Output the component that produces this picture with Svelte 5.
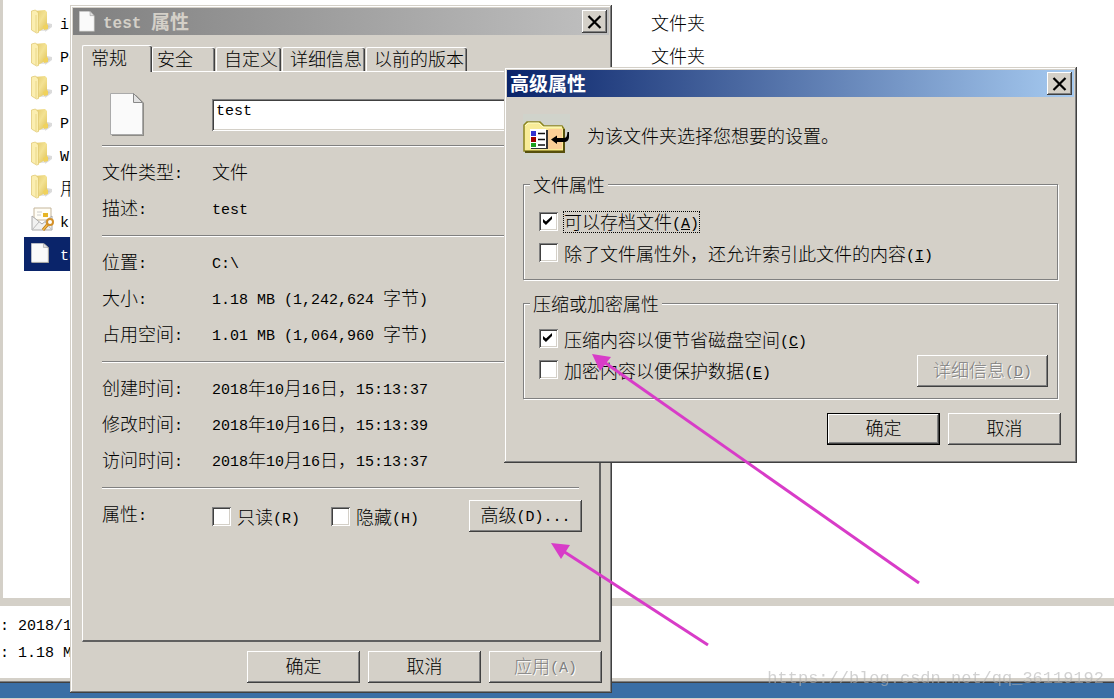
<script lang="ts">
  let fileName = $state('test')
  let activeTab = $state('常规')

  const files = [
    { name: 'in', icon: 'folder', type: '文件夹' },
    { name: 'Pe', icon: 'folder', type: '文件夹' },
    { name: 'Pr', icon: 'folder' },
    { name: 'Pr', icon: 'folder' },
    { name: 'Wi', icon: 'folder' },
    { name: '用', icon: 'folder' },
    { name: 'k', icon: 'key' },
    { name: 'te', icon: 'file', selected: true },
  ]

  const tabs = ['常规', '安全', '自定义', '详细信息', '以前的版本']

  const groups = [
    [
      ['文件类型:', '文件'],
      ['描述:', 'test'],
    ],
    [
      ['位置:', 'C:\\'],
      ['大小:', '1.18 MB (1,242,624 字节)'],
      ['占用空间:', '1.01 MB (1,064,960 字节)'],
    ],
    [
      ['创建时间:', '2018年10月16日，15:13:37'],
      ['修改时间:', '2018年10月16日，15:13:39'],
      ['访问时间:', '2018年10月16日，15:13:37'],
    ],
  ]

  // latin runs are half the width of a hanzi; "&" marks the access key
  function runs(text: string) {
    return text.match(/&.|[ -%'-~]+|[^ -~]+/g) ?? []
  }
</script>

{#snippet caption(text)}
  <span class="caption">{#each runs(text) as run}{#if run[0] === '&'}<u class="latin">{run[1]}</u>{:else if run.charCodeAt(0) < 127}<span class="latin">{run}</span>{:else}{run}{/if}{/each}</span>
{/snippet}

{#snippet page(width, height)}
  <svg {width} {height} viewBox="0 0 34 43" preserveAspectRatio="none" aria-hidden="true">
    <path d="M2 2h24l8 8v33H2z" fill="#8d8b86" />
    <path d="M.5.5h23l9 9v32H.5z" fill="#fafafa" stroke="#aaa" />
    <path d="M23.500 .5v9h9z" fill="#e2e2e2" stroke="#888" />
  </svg>
{/snippet}

{#snippet closeButton()}
  <button class="close" aria-label="关闭">
    <svg width="15" height="14" viewBox="0 0 15 14" aria-hidden="true">
      <path d="M1.500 1l12 12M13.500 1l-12 12" stroke="#000" stroke-width="2.200" fill="none" />
    </svg>
  </button>
{/snippet}

{#snippet check(text, checked, focused)}
  <label class="check">
    <input type="checkbox" {checked} />
    <span class:focused>{@render caption(text)}</span>
  </label>
{/snippet}

<div class="desktop">
  <svg width="0" height="0" class="defs" aria-hidden="true">
    <linearGradient id="folder-front" x1="0" y1="0" x2="1" y2="1">
      <stop offset="0" stop-color="#e3c866" />
      <stop offset=".5" stop-color="#f3e294" />
      <stop offset="1" stop-color="#dfc050" />
    </linearGradient>
  </svg>

  <div class="explorer">
    {#each files as file}
      <div class="file" class:selected={file.selected}>
        <div class="file-icon">
          {#if file.icon === 'folder'}
            <svg width="22" height="25" viewBox="0 0 22 25" aria-hidden="true">
              <path d="M14 23l7-5v-3l-5-1z" fill="#999" opacity=".35" />
              <path d="M7 22l7 0 5-5-3-1z" fill="#999" opacity=".25" />
              <path d="M3 2l11-1 2 2v15l-9 5z" fill="url(#folder-front)" />
              <path d="M12 17l4-2 1 1v4l-4 1z" fill="#f0d25c" />
              <path d="M.5 2l4-1 3 3v19.500l-2 .5-5-3z" fill="#fbeeb0" stroke="#dcc46c" stroke-width=".7" />
              <path d="M5 6v17" stroke="#e6d080" stroke-width=".8" />
            </svg>
          {:else if file.icon === 'key'}
            <svg width="24" height="25" viewBox="0 0 24 25" aria-hidden="true">
              <path d="M3 1h17v12H3z" fill="#fffdf5" stroke="#c5b69b" />
              <path d="M6 5h5M6 8h4" stroke="#ccc" />
              <path d="M12 6h5v4h-5z" fill="#e6b422" />
              <path d="M1 9l10 8 10-8v14H1z" fill="#f1f1f1" stroke="#aaa" />
              <path d="M1 23l7-8M21 23l-7-8" stroke="#bbb" />
              <path d="M17 17l-5 6" stroke="#b87818" stroke-width="3" />
              <path d="M17 17l-5 6" stroke="#f1b94a" stroke-width="1.500" />
              <circle cx="19" cy="15" r="3" fill="#fff" stroke="#d39029" stroke-width="2" />
            </svg>
          {:else}
            {@render page(18, 20)}
          {/if}
        </div>
        <div class="file-name">{@render caption(file.name)}</div>
        {#if file.type}<div>{file.type}</div>{/if}
      </div>
    {/each}
  </div>
  <div class="details">
    <div>{@render caption(': 2018/1')}</div>
    <div>{@render caption(': 1.18 M')}</div>
  </div>
  <div class="taskbar"></div>

  <section class="window properties">
    <header class="title inactive">
      {@render page(16, 21)}
      <h1>{@render caption('test 属性')}</h1>
      {@render closeButton()}
    </header>
    <div class="properties-body">
      <div class="tabs" role="tablist">
        {#each tabs as tab}
          <button
            role="tab"
            class="tab"
            class:active={tab === activeTab}
            aria-selected={tab === activeTab}
            onclick={() => (activeTab = tab)}>{tab}</button>
        {/each}
      </div>
      <div class="panel">
        <div class="name-row">
          <div class="name-icon">{@render page(34, 43)}</div>
          <input class="name-input" type="text" aria-label="文件名" bind:value={fileName} />
        </div>
        {#each groups as group}
          <dl>
            {#each group as [label, value]}
              <div class="row">
                <dt>{@render caption(label)}</dt>
                <dd>{@render caption(value)}</dd>
              </div>
            {/each}
          </dl>
        {/each}
        <div class="attributes">
          <div class="attributes-label">{@render caption('属性:')}</div>
          {@render check('只读(R)', false, false)}
          {@render check('隐藏(H)', false, false)}
          <button class="button advanced">{@render caption('高级(D)...')}</button>
        </div>
      </div>
      <footer class="buttons">
        <button class="button">确定</button>
        <button class="button">取消</button>
        <button class="button" disabled>{@render caption('应用(A)')}</button>
      </footer>
    </div>
  </section>

  <section class="window dialog">
    <header class="title">
      <h1>高级属性</h1>
      {@render closeButton()}
    </header>
    <div class="dialog-body">
      <div class="intro">
        <svg width="47" height="45" viewBox="0 0 47 45" aria-hidden="true">
          <path d="M0 0h47v45H0z" fill="#d0d3cb" />
          <path d="M1 37V11l3-3h13l4 4h18l2 3v22z" fill="#f8ec98" stroke="#8a8420" stroke-width="1.500" />
          <path d="M25 15h14v20H25z" fill="#fbcf96" />
          <path d="M2 12l3-3h11l4 4h19" stroke="#ffffc8" fill="none" />
          <path d="M2 38h39V15" stroke="#55500c" stroke-width="2" fill="none" />
          <path d="M8 16h17v19H8z" fill="#333" />
          <path d="M7 15h16v19H7z" fill="#fff" />
          <path d="M8 17h5v5H8z" fill="#3434d0" />
          <path d="M8 23h5v5H8z" fill="#a00000" />
          <path d="M8 29h5v4H8z" fill="#20a020" />
          <path d="M15 19.500h7M15 25.500h7M15 31h7" stroke="#111" stroke-width="1.500" />
          <path d="M28 25.500l6-4v2.500h7c3 0 3-3 3.500-6H46v5c0 3-2 5-5 5h-7v2z" fill="#000" />
        </svg>
        <p>为该文件夹选择您想要的设置。</p>
      </div>
      <fieldset>
        <legend>文件属性</legend>
        <div class="checks">
          {@render check('可以存档文件(&A)', true, true)}
          {@render check('除了文件属性外，还允许索引此文件的内容(&I)', false, false)}
        </div>
      </fieldset>
      <fieldset class="compress">
        <legend>压缩或加密属性</legend>
        <div class="compress-row">
          <div class="checks">
            {@render check('压缩内容以便节省磁盘空间(&C)', true, false)}
            {@render check('加密内容以便保护数据(&E)', false, false)}
          </div>
          <button class="button wide" disabled>{@render caption('详细信息(&D)')}</button>
        </div>
      </fieldset>
    </div>
    <footer class="buttons dialog-buttons">
      <button class="button default">确定</button>
      <button class="button">取消</button>
    </footer>
  </section>

  <svg class="arrows" width="1114" height="699" viewBox="0 0 1114 699" aria-hidden="true">
    <g stroke="#d83cc8" stroke-width="3">
      <path d="M604 362L919 583" />
      <path d="M563 551L708 645" />
    </g>
    <g fill="#d83cc8">
      <path d="M592 354l19 3-11 14z" />
      <path d="M551 543l19 2-9 14z" />
    </g>
  </svg>
  <div class="watermark">https://blog.csdn.net/qq_36119192</div>
</div>

<style>
  :global(body) {
    background: #fff;
  }

  .desktop {
    position: relative;
    display: flex;
    flex-direction: column;
    min-height: 100vh;
    overflow: hidden;
    color: #000;
    font-family: 'Noto Sans CJK SC', sans-serif;
    font-size: 18px;
    font-weight: 300;
    line-height: 24px;
  }

  .desktop * {
    box-sizing: border-box;
  }

  .defs {
    position: absolute;
  }

  .caption {
    white-space: pre;
  }

  .latin {
    font-family: 'Liberation Mono', monospace;
    font-size: 15px;
    line-height: 0;
    vertical-align: 1px;
  }

  button,
  input {
    font: inherit;
    color: inherit;
  }

  .explorer {
    flex: 1;
    padding-top: 6px;
    border-left: 3px solid #d4d0c8;
  }

  .file {
    display: flex;
    align-items: center;
    height: 33px;
    margin-left: 21px;
    padding-bottom: 2px;
    white-space: nowrap;
  }

  .file.selected {
    height: 34px;
    color: #fff;
    background: #0a246a;
    width: 60px;
  }

  .file-icon {
    display: flex;
    flex: none;
    width: 36px;
    padding-left: 7px;
  }

  .file-name {
    flex: 0 0 591px;
  }

  .selected .file-name {
    flex-basis: auto;
  }

  .details {
    height: 80px;
    padding-top: 4px;
    border-top: 8px solid #d4d0c8;
    line-height: 27px;
  }

  .taskbar {
    height: 21px;
    background: #3a6ea5;
    border-top: 3px solid #d4d0c8;
    border-bottom: 1px solid #d4d0c8;
    box-shadow: inset 0 1px #808080, inset 0 2px #404040;
  }

  .window {
    position: absolute;
    padding: 3px;
    background: #d4d0c8;
    box-shadow:
      inset -1px -1px #404040,
      inset 1px 1px #d4d0c8,
      inset -2px -2px #808080,
      inset 2px 2px #fff;
  }

  .properties {
    left: 70px;
    top: 5px;
    width: 542px;
  }

  .dialog {
    left: 504px;
    top: 67px;
    width: 573px;
  }

  .title {
    display: flex;
    align-items: center;
    height: 27px;
    padding: 0 2px 0 3px;
    color: #fff;
    background: linear-gradient(to right, #0a246a, #a6caf0);
  }

  .title.inactive {
    padding-left: 6px;
    color: #d4d0c8;
    background: linear-gradient(to right, #808080, #c0c0c0);
  }

  h1 {
    flex: 1;
    margin: 0;
    padding-bottom: 2px;
    font-size: 19px;
    font-weight: bold;
  }

  h1 .latin {
    font-size: 16px;
  }

  .inactive h1 {
    padding-left: 8px;
  }

  .close {
    display: flex;
    align-items: center;
    justify-content: center;
    width: 25px;
    height: 23px;
    padding: 0;
  }

  .close,
  .button {
    border: 0;
    background: #d4d0c8;
    box-shadow:
      inset -1px -1px #404040,
      inset 1px 1px #fff,
      inset -2px -2px #808080;
  }

  .button {
    width: 113px;
    height: 32px;
    padding: 0 0 4px;
  }

  .button.wide {
    width: 131px;
  }

  .button.default {
    border: 1px solid #000;
  }

  .button:disabled {
    color: #808080;
    text-shadow: 1px 1px #fff;
  }

  .properties-body {
    padding: 10px 7px 7px 9px;
  }

  .tabs {
    display: flex;
    align-items: flex-end;
    gap: 1px;
  }

  .tab {
    height: 24px;
    padding: 0 3px 2px 7px;
    border: 0;
    border-top: 1px solid #fff;
    border-left: 1px solid #fff;
    border-radius: 2px 2px 0 0;
    background: #d4d0c8;
    box-shadow: inset -1px 0 #404040, inset -2px 0 #808080;
    text-align: left;
    line-height: 21px;
  }

  .tab:nth-child(2) {
    width: 63px;
    padding-left: 4px;
  }

  .tab.active {
    position: relative;
    width: 70px;
    height: 27px;
    margin: 0 -1px -1px 0;
    padding: 0 0 4px 8px;
  }

  .panel {
    min-height: 571px;
    margin-right: 1px;
    padding: 0 20px 0 19px;
    border: 1px solid #fff;
    border-right: 2px solid #606060;
    border-bottom: 2px solid #606060;
  }

  .name-row {
    display: flex;
    align-items: center;
    padding: 21px 0 9px;
  }

  .name-icon {
    display: flex;
    width: 110px;
    padding-left: 8px;
  }

  .name-input {
    flex: 1;
    min-width: 0;
    height: 32px;
    padding: 0 4px 6px;
    border: 0;
    background: #fff;
    box-shadow:
      inset 1px 1px #808080,
      inset -1px -1px #fff,
      inset 2px 2px #404040,
      inset -2px -2px #d4d0c8;
    font-family: 'Liberation Mono', 'Noto Sans CJK SC', monospace;
    font-size: 15px;
  }

  dl,
  .attributes {
    margin: 0;
    padding: 7px 0 9px;
    border-top: 1px solid #808080;
    box-shadow: inset 0 1px #fff;
  }

  .row {
    display: flex;
    height: 36px;
    line-height: 35px;
  }

  dl {
    padding-top: 8px;
  }

  dt,
  .attributes-label {
    width: 110px;
  }

  dd {
    margin: 0;
  }

  .attributes {
    display: flex;
    align-items: center;
    padding-top: 12px;
  }

  .attributes-label {
    padding-bottom: 6px;
  }

  .attributes .check {
    width: 119px;
  }

  .advanced {
    margin-left: auto;
    margin-right: -3px;
  }

  .check {
    display: flex;
    align-items: center;
    gap: 6px;
  }

  .check input {
    appearance: none;
    flex: none;
    width: 19px;
    height: 19px;
    margin: 0;
    background: #fff;
    box-shadow:
      inset 1px 1px #808080,
      inset -1px -1px #fff,
      inset 2px 2px #404040,
      inset -2px -2px #d4d0c8;
  }

  .check input:checked::before {
    content: '';
    display: block;
    width: 9px;
    height: 9px;
    margin: 4px 0 0 4px;
    background: #000;
    clip-path: polygon(0 33%, 33% 60%, 100% 0, 100% 33%, 33% 100%, 0 70%);
  }

  .focused {
    height: 20px;
    outline: 1px dotted #000;
    line-height: 18px;
  }

  .buttons {
    display: flex;
    justify-content: flex-end;
    gap: 8px;
    padding-top: 9px;
  }

  .dialog-body {
    padding: 17px 16px 0;
  }

  .intro {
    display: flex;
    align-items: center;
    gap: 17px;
    margin-bottom: 14px;
  }

  .intro p {
    margin: 0;
    padding-bottom: 4px;
  }

  fieldset {
    min-width: 0;
    margin: 0 0 12px;
    padding: 11px 9px 11px 6px;
    border: 1px solid #808080;
    box-shadow: 1px 1px #fff, inset 1px 1px #fff;
  }

  .compress {
    margin-bottom: 0;
    padding-top: 9px;
  }

  legend {
    padding: 0 3px;
    background: #d4d0c8;
    line-height: 22px;
  }

  .checks {
    padding-left: 9px;
  }

  .checks .check {
    height: 31px;
  }

  .compress-row {
    display: flex;
    align-items: flex-end;
    justify-content: space-between;
  }

  .compress .checks {
    padding-bottom: 2px;
  }

  .dialog-buttons {
    padding: 14px 13px 15px;
  }

  .arrows {
    position: absolute;
    left: 0;
    top: 0;
    pointer-events: none;
  }

  .watermark {
    position: absolute;
    right: 10px;
    bottom: 8px;
    color: #b4b4b4;
    font-family: 'Liberation Mono', monospace;
    font-size: 17px;
    opacity: 0.6;
  }
</style>
